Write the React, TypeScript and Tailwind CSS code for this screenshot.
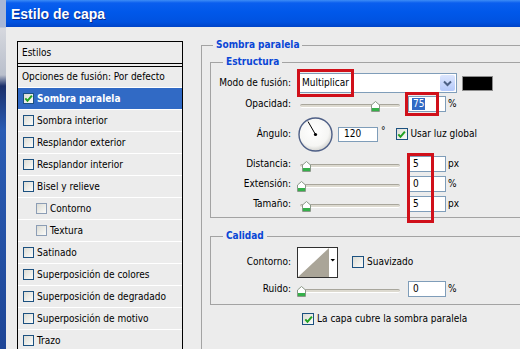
import React from 'react';

function CheckBox({ checked = false, dim = false, size = 'sm' }: { checked?: boolean; dim?: boolean; size?: 'sm' | 'md' }) {
  return (
    <span
      className={`flex shrink-0 items-center justify-center border bg-[linear-gradient(135deg,#dcdcd5,#fbfbf9)] ${
        size === 'md' ? 'h-[12px] w-[12px]' : 'h-[11px] w-[11px]'
      } ${dim ? 'border-[#8c9db5]' : 'border-[#1c5180]'}`}
    >
      {checked && (
        <svg width="9" height="9" viewBox="0 0 9 9">
          <path d="M1.3 4.3 L3.5 6.8 L7.9 1.6" fill="none" stroke="#21a121" strokeWidth="2" />
        </svg>
      )}
    </span>
  );
}

function StyleRow({ label, checked, selected, indent }: { label: string; checked?: boolean; selected?: boolean; indent?: boolean }) {
  return (
    <div
      className={`flex h-[22px] items-center gap-[3px] border-b border-white ${indent ? 'pl-[18px]' : 'pl-[5px]'} ${
        selected ? 'bg-[#316ac5] font-bold text-white' : 'text-black'
      }`}
    >
      <CheckBox checked={checked} dim={indent} />
      <span>{label}</span>
    </div>
  );
}

function Thumb({ at }: { at: number }) {
  // slider thumb, "at" = centre in px from track start
  return (
    <svg
      width="9"
      height="11"
      viewBox="0 0 9 11"
      className="absolute top-[-4px]"
      style={{ left: at - 4.5 }}
    >
      <path d="M0.5 4 L4.5 0.5 L8.5 4 L8.5 10.5 L0.5 10.5 Z" fill="#ffffff" stroke="#8a9888" />
      <rect x="1" y="7" width="7" height="3" fill="#35b04a" />
    </svg>
  );
}

function Slider({ at }: { at: number }) {
  return (
    <div className="relative mt-[4px] h-[4px] w-[100px] rounded-[2px] border-t border-[#a8a69c] border-b border-b-white bg-[#dddad0]">
      <Thumb at={at} />
    </div>
  );
}

function Field({ value, selected }: { value: string; selected?: boolean }) {
  return (
    <div className="ml-[8px] flex h-[16px] w-[38px] items-center border border-[#7f9db9] bg-white pl-[3px]">
      {selected ? <span className="bg-[#316ac5] px-[1px] text-white">{value}</span> : <span className="pl-[1px]">{value}</span>}
    </div>
  );
}

function Label({ children }: { children: React.ReactNode }) {
  return <div className="w-[80px] shrink-0 text-right">{children}</div>;
}

function SliderRow({ label, at, value, unit, selected }: { label: string; at: number; value: string; unit: string; selected?: boolean }) {
  return (
    <div className="flex h-[20px] items-center">
      <Label>{label}</Label>
      <div className="ml-[9px]">
        <Slider at={at} />
      </div>
      <Field value={value} selected={selected} />
      <span className="ml-[2px]">{unit}</span>
    </div>
  );
}

const styles = [
  { label: 'Sombra interior' },
  { label: 'Resplandor exterior' },
  { label: 'Resplandor interior' },
  { label: 'Bisel y relieve' },
  { label: 'Contorno', indent: true },
  { label: 'Textura', indent: true },
  { label: 'Satinado' },
  { label: 'Superposición de colores' },
  { label: 'Superposición de degradado' },
  { label: 'Superposición de motivo' },
  { label: 'Trazo' },
];

export default function App() {
  return (
    <div className="relative flex h-[349px] w-[520px] overflow-hidden bg-[#ececec] font-['DejaVu_Sans_Condensed','Liberation_Sans',sans-serif] text-[10px] leading-[12px] text-black">
      <div className="w-[6px] shrink-0 bg-[linear-gradient(to_bottom,#a8b7d6_0px,#a8b7d6_27px,#d6d8de_28px,#b9bfcc_75px,#1a2f6a_86px,#2a5cb4_130px,#1d4596_349px)]" />

      <div className="flex flex-1 flex-col">
        <div className="flex h-[27px] shrink-0 items-center bg-[linear-gradient(to_bottom,#3d8cf6_0px,#0a5eee_3px,#0058ea_12px,#0052e0_22px,#0044c8_27px)] pl-[5px] font-['Liberation_Sans',sans-serif] text-[14px] font-bold text-white [text-shadow:1px_1px_0_#0b2a8a]">
          Estilo de capa
        </div>

        <div className="flex flex-1">
          {/* styles list */}
          <div className="ml-[11px] mt-[14px] w-[166px] shrink-0 border border-black">
            <div className="flex h-[22px] items-center border-b border-black pl-[4px]">Estilos</div>
            <div className="h-[3px] border-b border-black" />
            <div className="flex h-[21px] items-center border-b border-white pl-[4px]">Opciones de fusión: Por defecto</div>
            <StyleRow label="Sombra paralela" checked selected />
            {styles.map((s) => (
              <StyleRow key={s.label} label={s.label} indent={s.indent} />
            ))}
          </div>

          {/* settings */}
          <fieldset className="ml-[18px] mt-[12px] w-[340px] shrink-0 border border-[#a3a3a3]">
            <legend className="ml-[11px] px-[3px] text-[10px] leading-[12px] font-bold text-[#0a46d6]">Sombra paralela</legend>

            <fieldset className="ml-[8px] mt-[5px] w-[330px] border border-[#a3a3a3] pb-[3px] pt-[4px]">
              <legend className="ml-[12px] px-[3px] leading-[12px] font-bold text-[#0a46d6]">Estructura</legend>

              <div className="flex h-[22px] items-center">
                <Label>Modo de fusión:</Label>
                <div className="ml-[6px] flex h-[20px] w-[160px] items-center border border-[#7f9db9] bg-white pl-[4px]">
                  <span className="flex-1">Multiplicar</span>
                  <div className="mr-[1px] flex h-[16px] w-[15px] items-center justify-center rounded-[2px] bg-[linear-gradient(to_bottom,#dce6fd,#b4c9fa)]">
                    <svg width="9" height="7" viewBox="0 0 9 7">
                      <path d="M1 1.5 L4.5 5 L8 1.5" fill="none" stroke="#4d6185" strokeWidth="2" />
                    </svg>
                  </div>
                </div>
                <div className="ml-[5px] h-[15px] w-[31px] border border-[#8d8d8d] bg-black" />
              </div>

              <SliderRow label="Opacidad:" at={75} value="75" unit="%" selected />

              <div className="flex h-[40px] items-center">
                <Label>Ángulo:</Label>
                <svg width="35" height="35" viewBox="0 0 35 35" className="ml-[7px]">
                  <defs>
                    <radialGradient id="dial" cx="45%" cy="40%" r="60%">
                      <stop offset="0%" stopColor="#ffffff" />
                      <stop offset="75%" stopColor="#f6f6f4" />
                      <stop offset="100%" stopColor="#d4d4d0" />
                    </radialGradient>
                  </defs>
                  <circle cx="17.5" cy="17.5" r="16.5" fill="url(#dial)" stroke="#4e5f86" strokeWidth="1.4" />
                  <line x1="17.5" y1="17.5" x2="10" y2="4.5" stroke="#000" strokeWidth="1" />
                  <circle cx="17.5" cy="17.5" r="1.6" fill="#000" />
                </svg>
                <div className="ml-[5px] flex h-[15px] w-[40px] items-center border border-[#7f9db9] bg-white pl-[5px]">120</div>
                <span className="ml-[3px] self-start pt-[11px]">°</span>
                <div className="ml-[10px] flex items-center gap-[3px]">
                  <CheckBox checked size="md" />
                  <span>Usar luz global</span>
                </div>
              </div>

              <SliderRow label="Distancia:" at={6} value="5" unit="px" />
              <SliderRow label="Extensión:" at={1} value="0" unit="%" />
              <SliderRow label="Tamaño:" at={6} value="5" unit="px" />
            </fieldset>

            <fieldset className="ml-[8px] mt-[12px] w-[330px] border border-[#a3a3a3] pb-[5px] pt-[3px]">
              <legend className="ml-[12px] px-[3px] leading-[12px] font-bold text-[#0a46d6]">Calidad</legend>

              <div className="flex h-[34px] items-center">
                <Label>Contorno:</Label>
                <div className="ml-[6px] h-[31px] w-[41px] border border-[#303030] bg-white">
                  <svg width="39" height="29" viewBox="0 0 39 29">
                    <polygon points="0,29 31,0 31,29" fill="#aaa598" />
                    <polygon points="32.5,11 37,11 34.75,13.5" fill="#000" />
                  </svg>
                </div>
                <div className="ml-[14px] flex items-center gap-[3px]">
                  <CheckBox size="md" />
                  <span>Suavizado</span>
                </div>
              </div>

              <SliderRow label="Ruido:" at={1} value="0" unit="%" />
            </fieldset>

            <div className="ml-[100px] mt-[8px] flex items-center gap-[3px]">
              <CheckBox checked size="md" />
              <span>La capa cubre la sombra paralela</span>
            </div>
          </fieldset>
        </div>
      </div>

      {/* red annotation frames */}
      <div className="absolute left-[297px] top-[69px] h-[28px] w-[57px] border-[3px] border-[#d0101a]" />
      <div className="absolute left-[405px] top-[92px] h-[24px] w-[34px] border-[3px] border-[#d0101a]" />
      <div className="absolute left-[407px] top-[153px] h-[70px] w-[27px] border-[3px] border-[#d0101a]" />
    </div>
  );
}
